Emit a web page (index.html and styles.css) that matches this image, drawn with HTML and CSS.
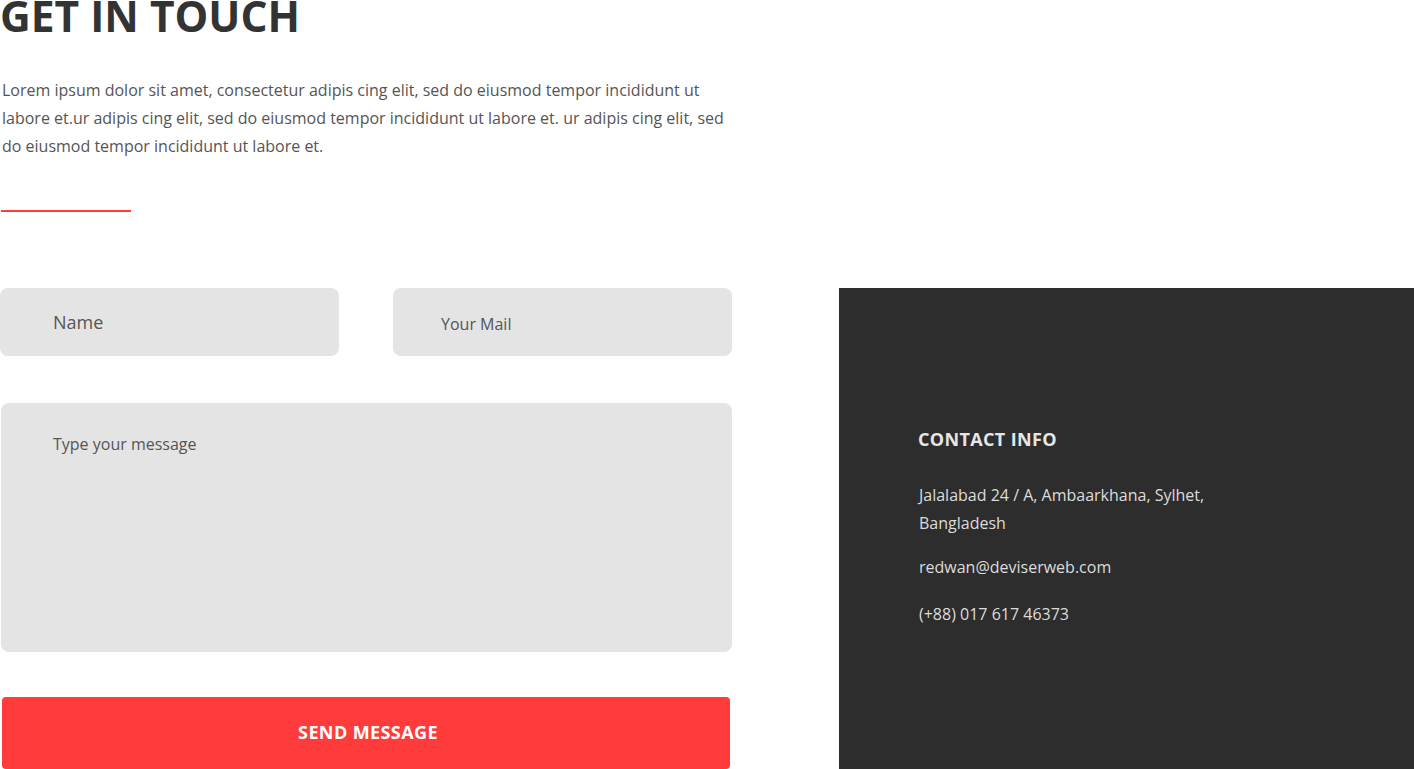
FILE: index.html
```html
<!DOCTYPE html>
<html>
<head>
<meta charset="utf-8">
<link rel="stylesheet" href="styles.css">
</head>
<body>
<section class="contact">
  <header class="intro">
    <h1 class="title">GET IN TOUCH</h1>
    <p class="lead">Lorem ipsum dolor sit amet, consectetur adipis cing elit, sed do eiusmod tempor incididunt ut labore et.ur adipis cing elit, sed do eiusmod tempor incididunt ut labore et. ur adipis cing elit, sed do eiusmod tempor incididunt ut labore et.</p>
    <div class="rule"></div>
  </header>
  <div class="main">
    <form class="form">
      <div class="row">
        <input class="field field-name" type="text" placeholder="Name">
        <input class="field field-mail" type="email" placeholder="Your Mail">
      </div>
      <textarea class="message" placeholder="Type your message"></textarea>
      <button class="send" type="button">SEND MESSAGE</button>
    </form>
    <aside class="info">
      <h3 class="info-title">CONTACT INFO</h3>
      <p class="info-line address">Jalalabad 24 / A, Ambaarkhana, Sylhet, Bangladesh</p>
      <p class="info-line email">redwan@deviserweb.com</p>
      <p class="info-line">(+88) 017 617 46373</p>
    </aside>
  </div>
</section>
</body>
</html>
```
FILE: styles.css
```css
html, body {
  margin: 0;
  padding: 0;
  background: #fff;
}
body {
  font-family: "Open Sans", "Noto Sans", sans-serif;
  color: #333;
  overflow: hidden;
}
.contact {
  width: 1414px;
}
.title {
  margin: 0;
  font-size: 42.5px;
  line-height: 32px;
  font-weight: 700;
  color: #333;
}
.lead {
  margin: 44px 0 0;
  padding-left: 2px;
  width: 730px;
  font-size: 16px;
  line-height: 28px;
  color: #555;
}
.rule {
  margin-top: 50px;
  margin-left: 1px;
  width: 130px;
  height: 2px;
  background: #ff3b3b;
}
.main {
  display: flex;
  margin-top: 76px;
}
.form {
  width: 732px;
  display: flex;
  flex-direction: column;
}
.row {
  display: flex;
  gap: 54px;
}
.field {
  box-sizing: border-box;
  width: 339px;
  height: 68px;
  border: none;
  border-radius: 8px;
  background: #e4e4e4;
  font-family: inherit;
  outline: none;
}
.field-name {
  padding-left: 53px;
  font-size: 18px;
}
.field-mail {
  padding-left: 48px;
  padding-top: 4px;
  font-size: 16px;
}
.field::placeholder,
.message::placeholder {
  color: #555;
  opacity: 1;
}
.message {
  box-sizing: border-box;
  margin: 47px 0 0 1px;
  width: 731px;
  height: 249px;
  border: none;
  border-radius: 8px;
  background: #e4e4e4;
  padding: 30px 52px;
  font-family: inherit;
  font-size: 16px;
  resize: none;
  outline: none;
}
.send {
  margin: 45px 0 0 2px;
  width: 728px;
  height: 72px;
  border: none;
  border-radius: 4px;
  background: #ff3b3b;
  color: #fff;
  font-family: inherit;
  font-weight: 700;
  font-size: 18px;
  letter-spacing: 0.4px;
  padding: 0 0 2px 4px;
}
.info {
  flex: 1;
  margin-left: 107px;
  height: 481px;
  background: #2d2d2d;
  padding: 138px 0 0 79px;
  box-sizing: border-box;
}
.info-title {
  margin: 0 0 29px;
  font-size: 18px;
  line-height: 26px;
  font-weight: 700;
  letter-spacing: 0.35px;
  color: #e6e6e6;
}
.info-line {
  margin: 0 0 16px 1px;
  font-size: 16px;
  line-height: 28px;
  color: #dcdcdc;
}
.email {
  margin-bottom: 19px;
}
.address {
  width: 300px;
}
```
